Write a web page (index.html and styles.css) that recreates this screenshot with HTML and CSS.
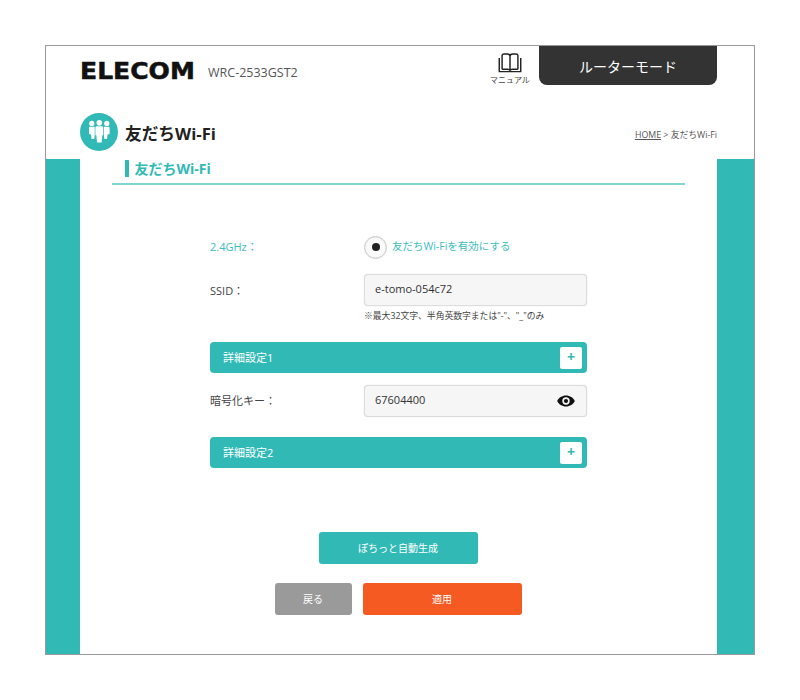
FILE: index.html
```html
<!DOCTYPE html>
<html lang="ja">
<head>
<meta charset="utf-8">
<title>友だちWi-Fi</title>
<link rel="stylesheet" href="styles.css">
</head>
<body>
<div class="frame">
  <header class="header">
    <div class="top">
      <div class="brand">
        <span class="logo">ELECOM</span>
        <span class="model">WRC-2533GST2</span>
      </div>
      <div class="top-right">
        <div class="manual">
          <svg class="book" width="26" height="22" viewBox="0 0 26 22" fill="none" stroke="#222" stroke-width="1.600">
            <path d="M1.200 5.500V20.500H24.800V5.500"/>
            <path d="M4.300 17.800V3C4.300 1.800 5 1 6.500 1H10C12 1 13 2 13 3.500V19M21.700 17.800V3C21.700 1.800 21 1 19.500 1H16C14 1 13 2 13 3.500"/>
            <path d="M4.300 17.800H10C11.500 17.800 13 18.500 13 19.500C13 18.500 14.500 17.800 16 17.800H21.700"/>
          </svg>
          <span class="manual-label">マニュアル</span>
        </div>
        <div class="mode">ルーターモード</div>
      </div>
    </div>
    <div class="title-row">
      <div class="page-title">
        <span class="title-icon">
          <svg width="26" height="26" viewBox="0 0 26 26" fill="#fff">
            <circle cx="5.800" cy="4.400" r="2.600"/>
            <circle cx="20.800" cy="4.400" r="2.600"/>
            <circle cx="13.300" cy="3.800" r="2.800"/>
            <path d="M3 9.300C3 8.200 3.800 7.800 4.600 7.800H8.700V17L8.200 20H5.600L5 15.500L3 15Z"/>
            <path d="M23.600 9.300C23.600 8.200 22.800 7.800 22 7.800H17.900V17L18.400 20H21L21.600 15.500L23.600 15Z"/>
            <path d="M9.400 8.700C9.400 7.700 10.100 7.200 11 7.200H15.600C16.500 7.200 17.200 7.700 17.200 8.700V16L16.200 16.500L15.700 23.500H11L10.400 16.500L9.400 16Z"/>
          </svg>
        </span>
        <span class="title-text">友だちWi-Fi</span>
      </div>
      <div class="crumb"><span class="crumb-home">HOME</span> &gt; 友だちWi-Fi</div>
    </div>
  </header>
  <div class="body-band">
    <main class="panel">
      <div class="section-head">
        <h2 class="section-title">友だちWi-Fi</h2>
      </div>
      <div class="form">
        <div class="row row-radio">
          <span class="label label-teal lift">2.4GHz：</span>
          <span class="radio"><span class="radio-dot"></span></span>
          <span class="radio-text lift">友だちWi-Fiを有効にする</span>
        </div>
        <div class="row row-ssid">
          <span class="label">SSID：</span>
          <div class="field"><span class="field-value">e-tomo-054c72</span></div>
        </div>
        <p class="note">※最大32文字、半角英数字または"-"、"_"のみ</p>
        <div class="bar bar-first">
          <span class="bar-label">詳細設定1</span>
          <span class="plus">+</span>
        </div>
        <div class="row row-key">
          <span class="label lift">暗号化キー：</span>
          <div class="field">
            <span class="field-value">67604400</span>
            <svg width="18" height="12" viewBox="0 0 18 12"><path fill="#111" fill-rule="evenodd" d="M9 .5C5 .5 1.700 2.800.2 6 1.700 9.200 5 11.500 9 11.500s7.300-2.300 8.800-5.500C16.300 2.800 13 .5 9 .5zm0 9.200A3.700 3.700 0 1 1 9 2.300a3.700 3.700 0 0 1 0 7.400zM9 3.900a2.100 2.100 0 1 0 0 4.200 2.100 2.100 0 0 0 0-4.200z"/></svg>
          </div>
        </div>
        <div class="bar bar-second">
          <span class="bar-label">詳細設定2</span>
          <span class="plus">+</span>
        </div>
      </div>
      <div class="btn btn-auto">ぽちっと自動生成</div>
      <div class="actions">
        <div class="btn btn-back">戻る</div>
        <div class="btn btn-apply">適用</div>
      </div>
    </main>
  </div>
</div>
</body>
</html>
```
FILE: styles.css
```css
* { box-sizing: border-box; }
html, body { margin: 0; padding: 0; background: #fff; }
body {
  padding: 45px;
  font-family: "Open Sans", "Noto Sans CJK JP", sans-serif;
  color: #444;
}
.frame {
  width: 710px;
  height: 610px;
  border: 1px solid #999;
  display: flex;
  flex-direction: column;
}
.header { height: 113px; padding: 0 37px 0 34px; flex: none; }
.top { display: flex; justify-content: space-between; height: 39px; }
.brand { display: flex; align-items: center; margin-top: 10px; height: 29px; }
.logo {
  display: block;
  width: 116px;
  font-family: "DejaVu Sans", sans-serif;
  font-weight: 700;
  font-size: 23px;
  letter-spacing: 0;
  color: #111;
  line-height: 29px;
  margin-top: 2px;
  -webkit-text-stroke: .5px #111;
  transform: scaleX(1.090);
  transform-origin: left center;
}
.model { margin-left: 12px; font-size: 12.500px; color: #555; margin-top: 3px; }
.top-right { display: flex; }
.manual { width: 40px; margin-right: 9px; display: flex; flex-direction: column; align-items: center; padding-top: 7px; }
.book { display: block; }
.manual-label { font-size: 8px; line-height: 11px; color: #444; margin-top: 1px; white-space: nowrap; }
.mode {
  width: 178px;
  height: 39px;
  background: #333;
  color: #fff;
  border-radius: 0 0 8px 8px;
  display: flex;
  align-items: center;
  justify-content: center;
  font-size: 14px;
}
.title-row { display: flex; justify-content: space-between; align-items: center; margin-top: 28px; height: 38px; }
.page-title { display: flex; align-items: center; }
.title-icon {
  width: 38px;
  height: 38px;
  border-radius: 50%;
  background: #31b9b6;
  display: flex;
  align-items: center;
  justify-content: center;
  margin-right: 7px;
}
.title-text { font-size: 16.700px; font-weight: 700; color: #222; margin-top: 2px; }
.crumb { font-size: 8.800px; color: #555; margin-top: 4px; }
.crumb-home { text-decoration: underline; }
.body-band { flex: 1; background: #31b9b6; padding: 0 37px 0 34px; display: flex; }
.panel { flex: 1; background: #fff; display: flex; flex-direction: column; align-items: center; }
.section-head { width: 573px; margin-left: -1px; height: 26px; border-bottom: 2px solid #7fd5d3; padding: 1px 0 0 13px; flex: none; }
.section-title {
  margin: 0;
  height: 17px;
  border-left: 4px solid #31b9b6;
  padding-left: 6px;
  font-size: 14px;
  line-height: 17px;
  font-weight: 700;
  color: #31b9b6;
}
.form { width: 377px; margin-top: 50px; }
.row { display: flex; align-items: center; }
.label { width: 154px; flex: none; font-size: 11px; color: #444; }
.label-teal { color: #3dbdba; }
.lift { margin-bottom: 3px; }
.row-radio { height: 24px; }
.radio {
  width: 23px;
  height: 23px;
  border-radius: 50%;
  border: 1px solid #ccc;
  background: #fafafa;
  box-shadow: inset 0 0 1px #bbb;
  display: flex;
  align-items: center;
  justify-content: center;
  margin-right: 5px;
}
.radio-dot { width: 8px; height: 8px; border-radius: 50%; background: #222; }
.radio-text { font-size: 10.500px; color: #3dbdba; }
.row-ssid { margin-top: 15px; }
.field {
  flex: 1;
  height: 32px;
  background: #f6f6f6;
  border: 1px solid #ddd;
  border-radius: 4px;
  box-shadow: 0 0 1px #ccc;
  padding: 0 11px 0 10px;
  display: flex;
  align-items: center;
  justify-content: space-between;
  font-size: 11px;
  color: #333;
}
.field-value { margin-bottom: 3px; }
.note { margin: 3px 0 0 154px; font-size: 8.800px; line-height: 14px; color: #444; }
.bar {
  height: 31px;
  background: #31b9b6;
  border-radius: 4px;
  padding: 0 5px 0 13px;
  display: flex;
  align-items: center;
  justify-content: space-between;
  color: #fff;
  font-size: 11px;
}
.bar-label { margin-bottom: 2px; }
.bar-first { margin-top: 19px; }
.bar-second { margin-top: 20px; }
.plus {
  width: 22px;
  height: 22px;
  background: #fff;
  border-radius: 2px;
  color: #31b9b6;
  font-weight: 700;
  font-size: 14px;
  line-height: 20px;
  text-align: center;
}
.row-key { margin-top: 12px; }
.btn {
  height: 32px;
  border-radius: 3px;
  color: #fff;
  font-size: 10px;
  padding-bottom: 2px;
  display: flex;
  align-items: center;
  justify-content: center;
}
.btn-auto { width: 159px; background: #31b9b6; margin-top: 64px; margin-left: -1px; }
.actions { display: flex; gap: 11px; margin-top: 19px; margin-left: -1px; }
.btn-back { width: 77px; background: #9a9a9a; }
.btn-apply { width: 159px; background: #f55a22; }
```
